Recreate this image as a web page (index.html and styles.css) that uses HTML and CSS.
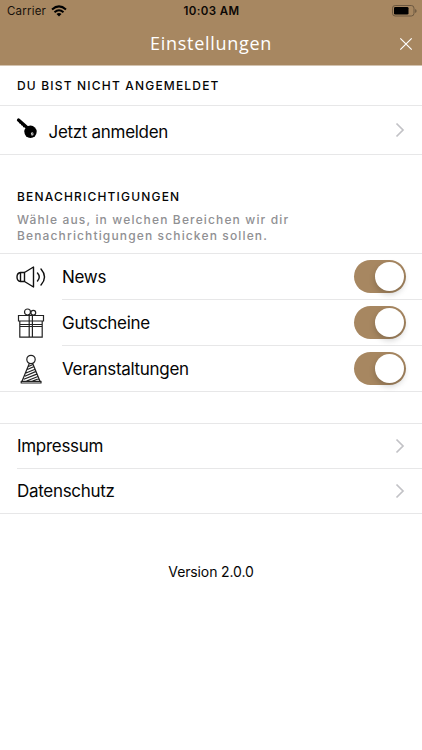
FILE: index.html
```html
<!DOCTYPE html>
<html lang="de">
<head>
<meta charset="utf-8">
<meta name="viewport" content="width=device-width, initial-scale=1">
<title>Einstellungen</title>
<link rel="stylesheet" href="styles.css">
</head>
<body>
<header class="header">
  <div class="status">
    <div class="carrier"><span>Carrier</span>
      <svg width="16" height="12" viewBox="0 0 16 12" fill="none" stroke="#000" stroke-width="2"><path d="M1 4.500Q8-1.700 15 4.500M3.500 7.200Q8 3.200 12.500 7.200"/><path d="M5.500 9Q8 7 10.500 9L8 11.500Z" fill="#000" stroke="none"/></svg>
    </div>
    <span class="time">10:03 AM</span>
    <svg class="battery" width="25" height="12" viewBox="0 0 25 12"><rect x=".5" y=".5" width="21.500" height="10.500" rx="2.700" fill="none" stroke="#6c5840"/><rect x="2" y="2" width="14.500" height="7.500" rx="1.300"/><path d="M23.300 4v4q1.200-.6 1.200-2t-1.200-2" fill="#5c4b37"/></svg>
  </div>
  <div class="titlebar">
    <h1>Einstellungen</h1>
    <svg class="close" width="14" height="14" viewBox="0 0 14 14" fill="none" stroke="#fff" stroke-width="1.200"><path d="M1.300 1.300l11.400 11.400M12.700 1.300L1.300 12.700"/></svg>
  </div>
</header>
<main>
  <section class="login">
    <h2>DU BIST NICHT ANGEMELDET</h2>
    <a class="row login-row">
      <svg class="key" width="22" height="22" viewBox="0 0 22 22"><path d="M2.500 3L11 10.500" stroke="#000" stroke-width="3.200" stroke-linecap="round"/><path d="M4.500 5l-1 1.200M6.500 7l-1 1.200M8.500 8.600l-1.200 1.500" stroke="#000" stroke-width="1.500"/><circle cx="14.500" cy="14.800" r="6.200"/><ellipse cx="16.200" cy="16.900" rx="1.300" ry="1.700" fill="#ddd"/><path d="M15.700 17.800l1-1.500" stroke="#222" stroke-width=".7"/></svg>
      <span class="label">Jetzt anmelden</span>
      <svg class="chevron" width="10" height="16" viewBox="0 0 10 16"><path d="M1.500 1.500L8 8l-6.500 6.500"/></svg>
    </a>
  </section>
  <section class="notifications">
    <div class="intro">
      <h2>BENACHRICHTIGUNGEN</h2>
      <p>Wähle aus, in welchen Bereichen wir dir<br>Benachrichtigungen schicken sollen.</p>
    </div>
    <div class="option">
      <svg class="icon" width="30" height="34" viewBox="0 0 30 34" fill="none" stroke="#111" stroke-width="1.400" stroke-linejoin="round" stroke-linecap="round"><path d="M4.500 12.500H8.500L17.500 7V27L8.500 21.500H4.500ZM8.500 12.500v9M4.500 12.500Q1 13 1 17t3.500 4.500M4.500 12.500v9M21.500 13q3.500 4 0 8M25 9q7 8 0 16"/></svg>
      <div class="row"><span class="label">News</span><span class="toggle"></span></div>
    </div>
    <div class="option">
      <svg class="icon" width="30" height="34" viewBox="0 0 30 34" fill="none" stroke="#222" stroke-width="1.200"><path d="M2.500 9.500h25v5.500h-25ZM3.800 15h22.400v16.200H3.800ZM13.200 9.500v21.700M16.400 9.500v21.700M3.800 18.500h22.400M3.800 20.500h22.400"/><circle cx="11.500" cy="6" r="3"/><circle cx="17.300" cy="6.700" r="2.400"/></svg>
      <div class="row"><span class="label">Gutscheine</span><span class="toggle"></span></div>
    </div>
    <div class="option">
      <svg class="icon" width="30" height="34" viewBox="0 0 30 34" fill="none" stroke="#222" stroke-width="1.200" stroke-linejoin="round"><circle cx="15" cy="7.500" r="4.200"/><path d="M13.300 11.500L6 29.300M16.700 11.500L24 29.300M5.200 29.300H25V31H5.200ZM12.500 14.500l4.500-2M11.500 17.500l6-2.800M10 21l8.500-3.500M8.800 24.200l10.700-4.600M7.800 27.300l13-5.200M10.500 29l11.500-4.500M16.500 29l6.700-2.500"/></svg>
      <div class="row"><span class="label">Veranstaltungen</span><span class="toggle"></span></div>
    </div>
  </section>
  <nav class="legal">
    <a class="row"><span class="label">Impressum</span><svg class="chevron" width="10" height="16" viewBox="0 0 10 16"><path d="M1.500 1.500L8 8l-6.500 6.500"/></svg></a>
    <a class="row"><span class="label">Datenschutz</span><svg class="chevron" width="10" height="16" viewBox="0 0 10 16"><path d="M1.500 1.500L8 8l-6.500 6.500"/></svg></a>
  </nav>
  <p class="version">Version 2.0.0</p>
</main>
</body>
</html>
```
FILE: styles.css
```css
* { box-sizing: border-box; }
body { margin: 0; background: #fff; color: #050505; font-family: Inter, "Liberation Sans", sans-serif; min-height: 750px; }
h1, h2, p { margin: 0; }
svg { display: block; flex: none; }
.header { height: 66px; background: #a78761; border-bottom: 1px solid #d3c3b0; }
.status { height: 22px; display: grid; grid-template-columns: 1fr auto 1fr; align-items: center; padding: 0 5px 0 6px; font-size: 11.500px; line-height: 22px; color: #17110b; }
.carrier { display: flex; align-items: center; gap: 5px; padding-left: 1px; letter-spacing: .2px; }
.time { font-weight: 600; letter-spacing: .4px; color: #0c0805; }
.battery { justify-self: end; }
.titlebar { height: 43px; display: grid; grid-template-columns: 1fr auto 1fr; align-items: center; padding: 0 9px; }
.titlebar h1 { grid-column: 2; color: #fff; font: 400 18px/43px "Open Sans", sans-serif; letter-spacing: .7px; }
.close { justify-self: end; }
h2 { font-size: 12px; line-height: 16px; font-weight: 500; letter-spacing: 1.180px; }
.login h2 { height: 40px; padding: 12px 17px 0; border-bottom: 1px solid #e7e7e8; }
.row { display: flex; align-items: center; justify-content: space-between; }
.label { font-size: 17px; line-height: 24px; letter-spacing: -.300px; white-space: nowrap; }
.login-row { height: 49px; padding: 3px 17px 0 16px; border-bottom: 1px solid #e7e7e8; }
.login-row .label { flex: 1; margin-left: 10.500px; }
.key { margin-top: -7px; }
.chevron { fill: none; stroke: #c2c2c6; stroke-width: 1.700; }
.login-row .chevron { margin-top: -3px; }
.intro { height: 99px; padding: 34px 17px 0; border-bottom: 1px solid #e7e7e8; }
.intro p { margin-top: 7px; color: #909093; font-size: 12px; font-weight: 500; line-height: 15.500px; letter-spacing: 1.140px; white-space: nowrap; }
.option { display: flex; align-items: center; height: 46px; padding-left: 16px; }
.option .row { flex: 1; height: 46px; margin-left: 16px; padding-right: 16px; border-bottom: 1px solid #e7e7e8; }
.option:last-child { border-bottom: 1px solid #e7e7e8; }
.option:last-child .row { border: 0; height: 45px; }
.toggle { width: 52.500px; height: 33px; border-radius: 17px; background: #a78761; padding: 2px; display: flex; justify-content: flex-end; }
.toggle::before { content: ""; width: 29px; height: 29px; border-radius: 50%; background: #fff; box-shadow: 0 3px 6px #0003; }
.legal { margin-top: 31px; border-top: 1px solid #e7e7e8; border-bottom: 1px solid #e7e7e8; padding-left: 17px; }
.legal .row { height: 44px; padding-right: 17px; }
.legal .row + .row { height: 45px; border-top: 1px solid #e7e7e8; }
.version { text-align: center; margin-top: 48px; font-size: 14px; line-height: 20px; letter-spacing: -.130px; }
```
